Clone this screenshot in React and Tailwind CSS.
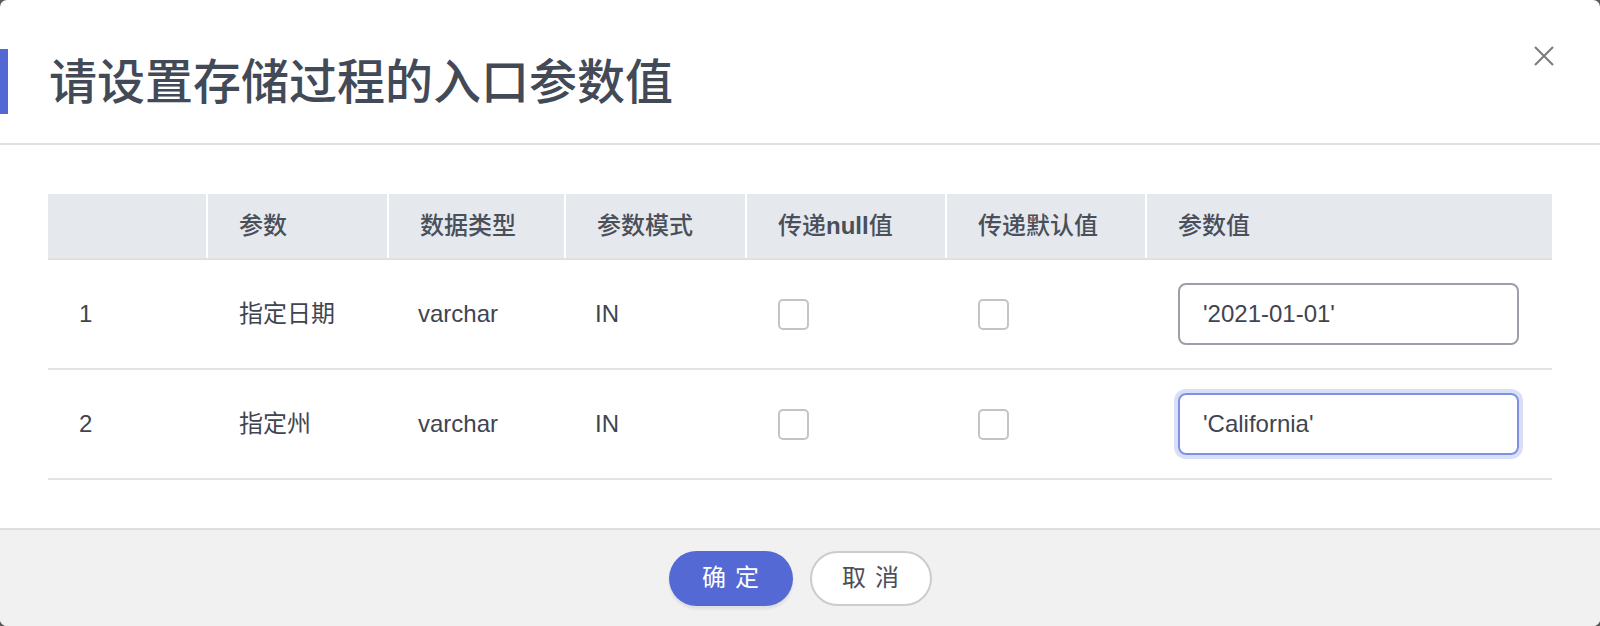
import React from "react";

const font = { fontFamily: '"Liberation Sans", "Noto Sans CJK SC", sans-serif' };

const cols = "grid-cols-[158px_181px_177px_181px_200px_200px_407px]";

function Checkbox() {
  return <div className="w-[31px] h-[31px] border-2 border-[#c4c4c4] rounded-[5px] bg-white" />;
}

function Row({ n, name, value, focused }) {
  return (
    <div className={`grid ${cols} h-[110px] border-b-2 border-[#e3e3e3] items-center text-[24px] text-[#3f4550]`}>
      <div className="pl-[31px]">{n}</div>
      <div className="pl-[33px]">{name}</div>
      <div className="pl-[31px]">varchar</div>
      <div className="pl-[31px]">IN</div>
      <div className="pl-[33px]"><Checkbox /></div>
      <div className="pl-[33px]"><Checkbox /></div>
      <div className="pl-[33px]">
        <div
          className={
            focused
              ? "w-[341px] h-[62px] border-2 border-[#7d90e2] rounded-[8px] pl-[23px] flex items-center shadow-[0_0_0_4px_#d9dff7]"
              : "w-[341px] h-[62px] border-2 border-[#9d9fa8] rounded-[8px] pl-[23px] flex items-center"
          }
        >
          {value}
        </div>
      </div>
    </div>
  );
}

export default function App() {
  const headers = ["", "参数", "数据类型", "参数模式", "传递null值", "传递默认值", "参数值"];
  return (
    <div className="w-[1600px] h-[626px] bg-[#5a5a5a]" style={font}>
      <div className="w-full h-full bg-white rounded-[7px] overflow-hidden flex flex-col">
        <div className="h-[145px] border-b-2 border-[#e1e1e1] flex items-center relative shrink-0">
          <div className="w-[8px] h-[65px] bg-[#5468d4] mt-[19px]" />
          <div className="ml-[41px] text-[48px] font-medium text-[#434a57] leading-none mt-[23px]">
            请设置存储过程的入口参数值
          </div>
          <svg
            className="absolute left-[1534px] top-[46px]"
            width="20"
            height="20"
            viewBox="0 0 20 20"
            fill="none"
            stroke="#7a7a7a"
            strokeWidth="2"
          >
            <path d="M1 1 L19 19 M19 1 L1 19" />
          </svg>
        </div>
        <div className="flex-1 pt-[49px] px-[48px]">
          <div className={`grid ${cols} h-[66px] bg-[#e5e9ee] border-b-2 border-[#e0e0e0] items-center text-[24px] font-medium text-[#4a4f5a]`}>
            {headers.map((h, i) => (
              <div
                key={i}
                className={i === 0 ? "h-full flex items-center" : "h-full flex items-center border-l-2 border-white pl-[31px]"}
              >
                {h === "传递null值" ? (
                  <span>
                    传递<span className="font-bold">null</span>值
                  </span>
                ) : (
                  h
                )}
              </div>
            ))}
          </div>
          <Row n="1" name="指定日期" value="'2021-01-01'" />
          <Row n="2" name="指定州" value="'California'" focused />
        </div>
        <div className="h-[98px] shrink-0 bg-[#f1f1f1] border-t-2 border-[#dedede] flex items-center justify-center gap-[17px]">
          <button className="w-[124px] h-[55px] rounded-full bg-[#5469d4] text-white text-[24px] tracking-[9px] pl-[9px] shadow-[0_3px_3px_rgba(0,0,0,0.08)]">
            确定
          </button>
          <button className="w-[122px] h-[55px] rounded-full bg-white border-2 border-[#cccccc] text-[#4a4f5a] text-[24px] tracking-[9px] pl-[9px]">
            取消
          </button>
        </div>
      </div>
    </div>
  );
}
